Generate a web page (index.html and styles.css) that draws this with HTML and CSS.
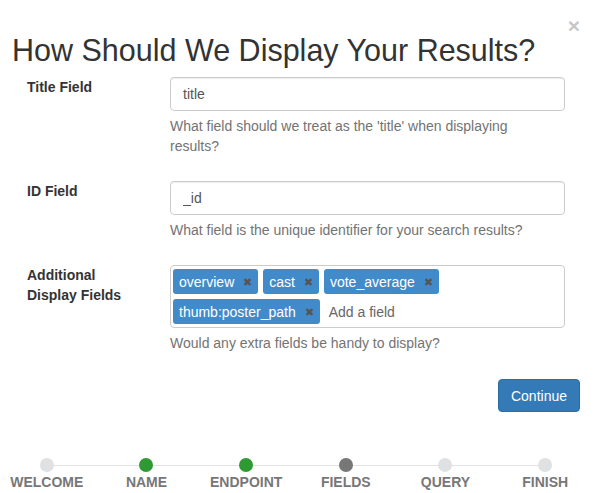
FILE: index.html
```html
<!DOCTYPE html>
<html lang="en">
<head>
<meta charset="utf-8">
<title>How Should We Display Your Results?</title>
<link rel="stylesheet" href="styles.css">
</head>
<body>
<div class="modal">
  <button class="close" type="button" aria-label="Close">&times;</button>
  <h2 class="title">How Should We Display Your Results?</h2>
  <form class="form">
    <div class="row">
      <label class="label">Title Field</label>
      <div class="control">
        <input class="input" type="text" value="title">
        <p class="help">What field should we treat as the 'title' when displaying results?</p>
      </div>
    </div>
    <div class="row">
      <label class="label">ID Field</label>
      <div class="control">
        <input class="input" type="text" value="_id">
        <p class="help">What field is the unique identifier for your search results?</p>
      </div>
    </div>
    <div class="row">
      <label class="label">Additional<br>Display Fields</label>
      <div class="control">
        <div class="tags">
          <span class="tag">overview<span class="tag-x">&#x2716;</span></span>
          <span class="tag">cast<span class="tag-x">&#x2716;</span></span>
          <span class="tag">vote_average<span class="tag-x">&#x2716;</span></span>
          <span class="tag">thumb:poster_path<span class="tag-x">&#x2716;</span></span>
          <span class="tag-input">Add a field</span>
        </div>
        <p class="help">Would any extra fields be handy to display?</p>
      </div>
    </div>
  </form>
  <div class="footer">
    <button class="btn" type="button">Continue</button>
  </div>
  <ol class="steps">
    <li class="step"><span class="dot"></span><span class="step-label">Welcome</span></li>
    <li class="step done"><span class="dot"></span><span class="step-label">Name</span></li>
    <li class="step done"><span class="dot"></span><span class="step-label">Endpoint</span></li>
    <li class="step current"><span class="dot"></span><span class="step-label">Fields</span></li>
    <li class="step"><span class="dot"></span><span class="step-label">Query</span></li>
    <li class="step"><span class="dot"></span><span class="step-label">Finish</span></li>
  </ol>
</div>
</body>
</html>
```

FILE: styles.css
```css
* { box-sizing: border-box; }

html, body {
  margin: 0;
  background: #fff;
}

body {
  font-family: "Liberation Sans", Arial, Helvetica, sans-serif;
  font-size: 14px;
  line-height: 20px;
  color: #333;
}

.modal {
  position: relative;
  width: 594px;
  height: 493px;
  overflow: hidden;
}

.close {
  position: absolute;
  top: 15px;
  right: 14px;
  padding: 0;
  border: 0;
  background: none;
  font-family: "Liberation Sans", Arial, sans-serif;
  font-size: 21px;
  font-weight: bold;
  line-height: 21px;
  color: #c8c8c8;
  cursor: pointer;
}

.title {
  margin: 34px 0 0 12px;
  font-size: 30.5px;
  font-weight: 500;
  line-height: 33px;
  color: #333;
}

.form {
  margin-top: 10px;
  padding-left: 27px;
}

.row {
  display: grid;
  grid-template-columns: 143px 395px;
  margin-bottom: 15px;
}

.label {
  font-weight: bold;
  line-height: 20px;
}

.input {
  display: block;
  width: 100%;
  height: 34px;
  padding: 6px 12px;
  border: 1px solid #ccc;
  border-radius: 4px;
  box-shadow: inset 0 1px 1px rgba(0, 0, 0, .075);
  font-family: inherit;
  font-size: 14px;
  color: #555;
}

.help {
  margin: 5px 0 10px;
  padding-right: 12px;
  color: #737373;
}

.tags {
  display: flex;
  flex-wrap: wrap;
  align-items: center;
  gap: 5px;
  padding: 3px 2px 3px 2px;
  border: 1px solid #ccc;
  border-radius: 4px;
}

.tag {
  display: inline-flex;
  align-items: center;
  height: 25px;
  padding: 0 6px;
  border-radius: 3px;
  background: #428bca;
  color: #fff;
  font-size: 14px;
  white-space: nowrap;
}

.tag-x {
  margin-left: 9px;
  font-size: 11px;
  color: #555;
}

.tag-input {
  padding-left: 4px;
  color: #666;
}

.footer {
  display: flex;
  justify-content: flex-end;
  padding-right: 14px;
  margin-top: 16px;
}

.btn {
  height: 33px;
  padding: 6px 12px;
  border: 1px solid #2e6da4;
  border-radius: 4px;
  background: #337ab7;
  color: #fff;
  font-family: inherit;
  font-size: 14px;
  line-height: 20px;
}

.steps {
  display: grid;
  grid-template-columns: repeat(6, 1fr);
  width: 598px;
  margin: 46px 0 0 -3px;
  padding: 0;
  list-style: none;
}

.step {
  position: relative;
  display: flex;
  flex-direction: column;
  align-items: center;
}

.step::before,
.step::after {
  content: "";
  position: absolute;
  top: 7px;
  height: 1px;
  width: 50%;
  background: #e2e2e2;
}

.step::before { left: 0; }
.step::after { right: 0; }
.step:first-child::before,
.step:last-child::after { display: none; }

.dot {
  position: relative;
  z-index: 1;
  width: 14px;
  height: 14px;
  border-radius: 50%;
  background: #e0e1e3;
}

.done .dot { background: #2f9a34; }
.current .dot { background: #777; }

.step-label {
  margin-top: 0;
  font-size: 14px;
  font-weight: bold;
  line-height: 20px;
  text-transform: uppercase;
  color: #777;
}
```
